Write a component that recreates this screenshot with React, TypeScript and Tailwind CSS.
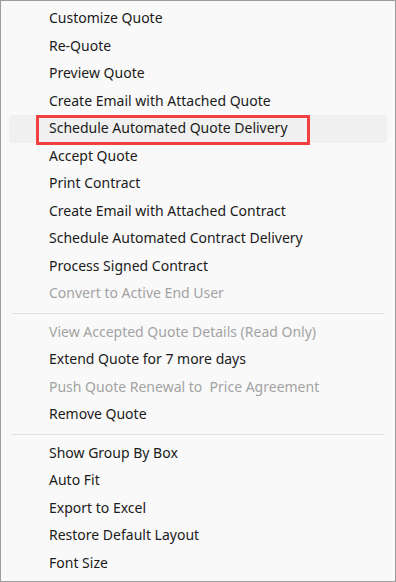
import React from "react";

type Item = { label: string; disabled?: boolean; active?: boolean };

const groups: Item[][] = [
  [
    { label: "Customize Quote" },
    { label: "Re-Quote" },
    { label: "Preview Quote" },
    { label: "Create Email with Attached Quote" },
    { label: "Schedule Automated Quote Delivery", active: true },
    { label: "Accept Quote" },
    { label: "Print Contract" },
    { label: "Create Email with Attached Contract" },
    { label: "Schedule Automated Contract Delivery" },
    { label: "Process Signed Contract" },
    { label: "Convert to Active End User", disabled: true },
  ],
  [
    { label: "View Accepted Quote Details (Read Only)", disabled: true },
    { label: "Extend Quote for 7 more days" },
    { label: "Push Quote Renewal to\u00a0 Price Agreement", disabled: true },
    { label: "Remove Quote" },
  ],
  [
    { label: "Show Group By Box" },
    { label: "Auto Fit" },
    { label: "Export to Excel" },
    { label: "Restore Default Layout" },
    { label: "Font Size" },
  ],
];

const MenuRow = ({ item }: { item: Item }) => (
  <div className="relative px-[8px]">
    <div
      className={
        "flex h-[27.5px] items-center rounded-[4px] pb-[2px] pl-[40px] text-[14px] " +
        (item.active ? "bg-[#f0f0f0] " : "") +
        (item.disabled ? "text-[#a3a3a3]" : "text-[#1b1b1b]")
      }
    >
      {item.label}
    </div>
    {item.active && (
      <div className="pointer-events-none absolute left-[35px] top-[0px] h-[30px] w-[274px] border-[3px] border-[#f23f42]" />
    )}
  </div>
);

export default function App() {
  return (
    <div
      className="h-[582px] w-[396px] border border-[#9c9c9c] bg-[#f9f9f9] pt-[4px]"
      style={{ fontFamily: '"Noto Sans", "Liberation Sans", Arial, sans-serif' }}
    >
      {groups.map((group, gi) => (
        <div key={gi}>
          {gi > 0 && (
            <div className="flex h-[11px] items-center px-[11px]">
              <div className="h-px w-full bg-[#e0e0e0]" />
            </div>
          )}
          {group.map((item) => (
            <MenuRow key={item.label} item={item} />
          ))}
        </div>
      ))}
    </div>
  );
}
